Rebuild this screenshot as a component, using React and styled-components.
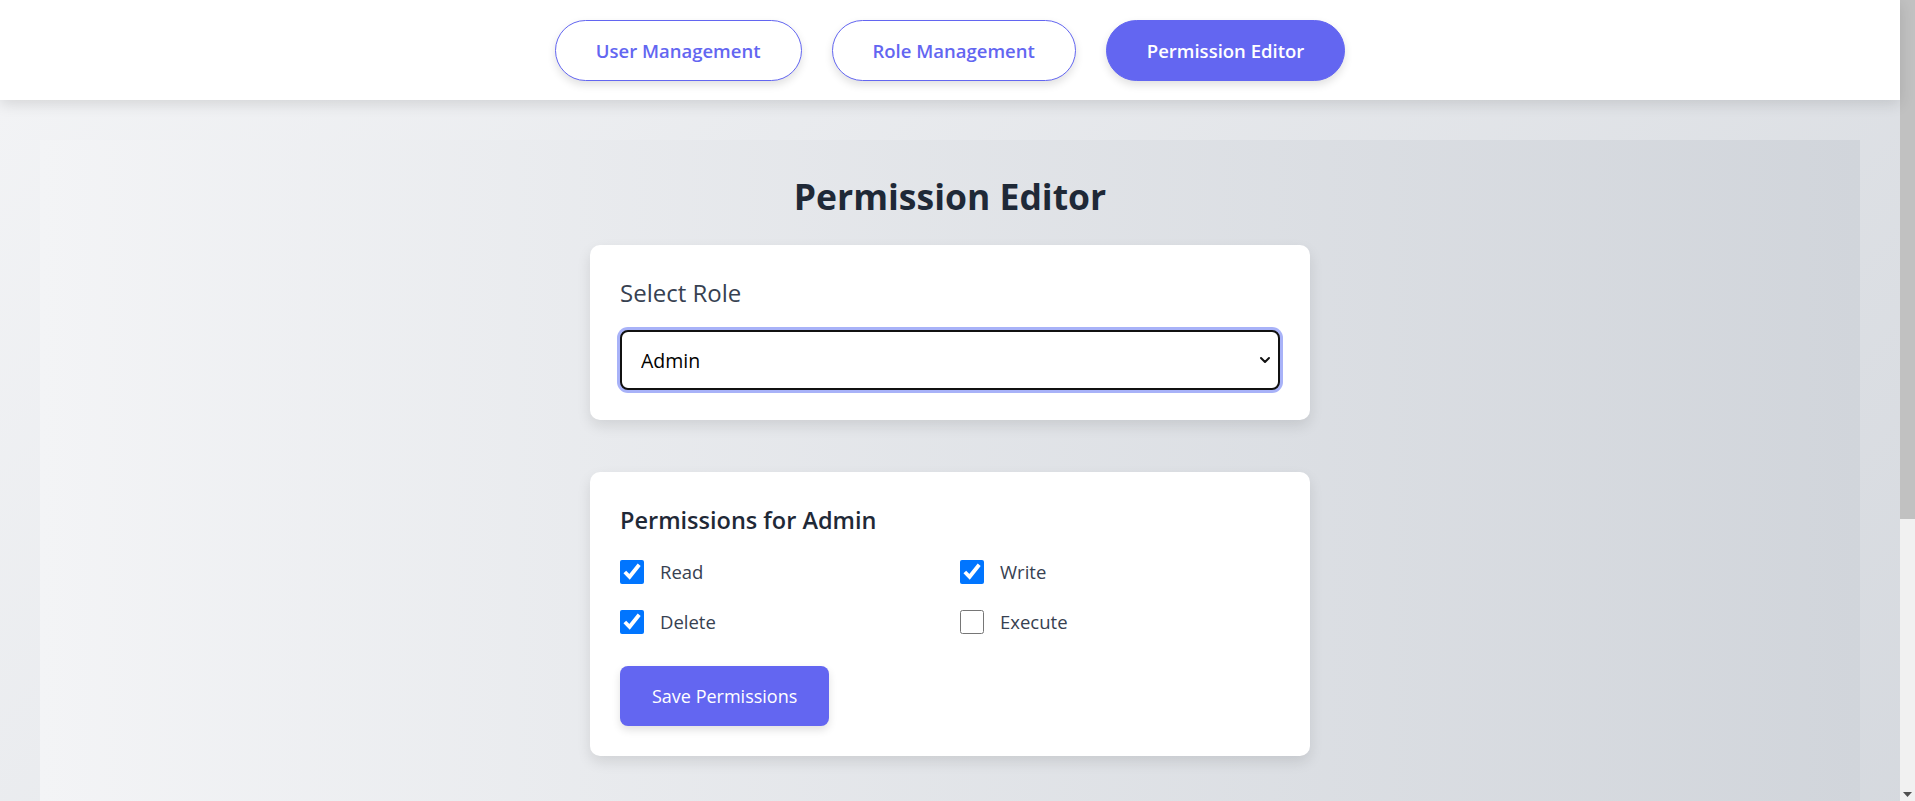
import React, { useState } from "react";
import styled, { createGlobalStyle } from "styled-components";

const GlobalStyle = createGlobalStyle`
  html, body {
    margin: 0;
    padding: 0;
  }
  body {
    font-family: "Open Sans", "Noto Sans", sans-serif;
    background: linear-gradient(135deg, #f3f4f6 0%, #d1d5db 100%);
    min-height: 100vh;
    color: #1f2937;
  }
  * { box-sizing: border-box; }
`;

const Shell = styled.div`
  display: flex;
  align-items: flex-start;
`;

const Page = styled.div`
  flex: 1;
  min-width: 0;
`;

const ScrollTrack = styled.div`
  position: sticky;
  top: 0;
  flex: none;
  width: 15px;
  height: 100vh;
  background: #f1f1f1;
  display: flex;
  flex-direction: column;
  align-items: center;
`;

const ScrollThumb = styled.div`
  width: 100%;
  height: 519px;
  background: #c1c1c1;
`;

const ScrollArrow = styled.svg`
  margin-top: auto;
  margin-bottom: 4px;
`;

const Header = styled.header`
  position: relative;
  z-index: 2;
  height: 100px;
  background: #ffffff;
  display: flex;
  align-items: center;
  justify-content: center;
  gap: 30px;
  box-shadow: 0 4px 14px rgba(0, 0, 0, 0.12);
`;

const NavButton = styled.button`
  height: 61px;
  padding: 0 40px;
  border-radius: 999px;
  border: 1px solid #6366f1;
  background: ${(p) => (p.$active ? "#6366f1" : "#ffffff")};
  color: ${(p) => (p.$active ? "#ffffff" : "#6366f1")};
  font-family: inherit;
  font-size: 18.5px;
  font-weight: 600;
  box-shadow: 0 4px 8px rgba(0, 0, 0, 0.12);
  cursor: pointer;
`;

const Main = styled.main`
  padding: 40px;
`;

const Panel = styled.section`
  min-height: 1030px;
  background: linear-gradient(to right, #f3f4f6 0%, #d1d5db 100%);
  padding: 32px 0;
  display: flex;
  flex-direction: column;
  align-items: center;
`;

const Title = styled.h1`
  margin: 0 0 25px;
  font-size: 35.5px;
  line-height: 48px;
  font-weight: 700;
  color: #1f2937;
`;

const Card = styled.div`
  width: 720px;
  padding: 30px;
  background: #ffffff;
  border-radius: 10px;
  box-shadow: 0 6px 14px rgba(0, 0, 0, 0.1);
  margin-bottom: ${(p) => p.$gap || 0}px;
`;

const Label = styled.label`
  display: block;
  font-size: 24px;
  line-height: 36px;
  font-weight: 500;
  color: #374151;
  margin-bottom: 19px;
`;

const SelectWrap = styled.div`
  position: relative;
`;

const Select = styled.select`
  appearance: none;
  -webkit-appearance: none;
  width: 100%;
  height: 60px;
  padding: 0 40px 0 19px;
  border: 2px solid #111111;
  border-radius: 8px;
  box-shadow: 0 0 0 3px #a8b2f8;
  background: #ffffff;
  font-family: inherit;
  font-size: 19.5px;
  color: #000000;
  outline: none;
`;

const Chevron = styled.svg`
  position: absolute;
  right: 8px;
  top: 50%;
  transform: translateY(-50%);
  pointer-events: none;
`;

const CardTitle = styled.h3`
  margin: 0 0 20px;
  font-size: 23.5px;
  line-height: 36px;
  font-weight: 600;
  color: #1f2937;
`;

const Grid = styled.div`
  display: grid;
  grid-template-columns: 1fr 1fr;
  column-gap: 20px;
  row-gap: 23px;
`;

const CheckItem = styled.label`
  display: flex;
  align-items: center;
  gap: 16px;
  height: 27px;
  font-size: 18.5px;
  color: #374151;
  cursor: pointer;
`;

const Checkbox = styled.input`
  width: 24px;
  height: 24px;
  margin: 0;
`;

const SaveButton = styled.button`
  margin-top: 31px;
  height: 60px;
  padding: 0 32px;
  border: none;
  border-radius: 8px;
  background: #6366f1;
  color: #ffffff;
  font-family: inherit;
  font-size: 18px;
  font-weight: 400;
  box-shadow: 0 4px 8px rgba(0, 0, 0, 0.12);
  cursor: pointer;
`;

const perms = [
  { key: "read", label: "Read", checked: true },
  { key: "write", label: "Write", checked: true },
  { key: "delete", label: "Delete", checked: true },
  { key: "execute", label: "Execute", checked: false },
];

export default function App() {
  const [role, setRole] = useState("Admin");
  return (
    <>
      <GlobalStyle />
      <Shell>
        <Page>
          <Header>
            <NavButton>User Management</NavButton>
            <NavButton>Role Management</NavButton>
            <NavButton $active>Permission Editor</NavButton>
          </Header>
          <Main>
            <Panel>
              <Title>Permission Editor</Title>
              <Card $gap={52}>
                <Label htmlFor="role">Select Role</Label>
                <SelectWrap>
                  <Select id="role" value={role} onChange={(e) => setRole(e.target.value)}>
                    <option>Admin</option>
                    <option>Editor</option>
                    <option>Viewer</option>
                  </Select>
                  <Chevron width="14" height="14" viewBox="0 0 14 14">
                    <path d="M3 5 L7 9 L11 5" fill="none" stroke="#111" strokeWidth="2" strokeLinecap="round" strokeLinejoin="round" />
                  </Chevron>
                </SelectWrap>
              </Card>
              <Card>
                <CardTitle>Permissions for {role}</CardTitle>
                <Grid>
                  {perms.map((p) => (
                    <CheckItem key={p.key}>
                      <Checkbox type="checkbox" defaultChecked={p.checked} />
                      {p.label}
                    </CheckItem>
                  ))}
                </Grid>
                <SaveButton>Save Permissions</SaveButton>
              </Card>
            </Panel>
          </Main>
        </Page>
        <ScrollTrack>
          <ScrollThumb />
          <ScrollArrow width="9" height="5" viewBox="0 0 9 5">
            <path d="M0 0 H9 L4.5 5 Z" fill="#505050" />
          </ScrollArrow>
        </ScrollTrack>
      </Shell>
    </>
  );
}
